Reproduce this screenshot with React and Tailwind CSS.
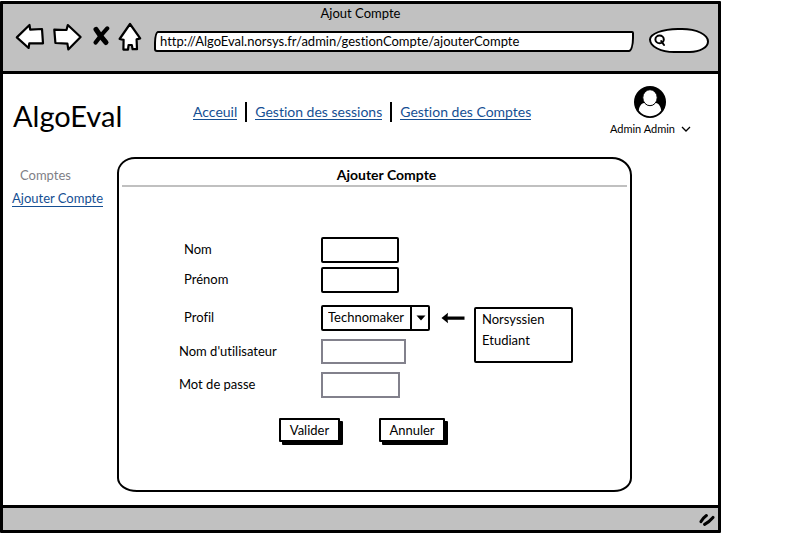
import React from "react";

const Stroke = ({ children, className, viewBox }) => (
  <svg
    viewBox={viewBox}
    className={className}
    fill="white"
    stroke="black"
    strokeWidth="2.2"
    strokeLinejoin="round"
    strokeLinecap="round"
    aria-hidden="true"
  >
    {children}
  </svg>
);

function BrowserBar() {
  return (
    <header className="border-b-[3px] border-black bg-[#c1c1c1] pb-[18px]">
      <h1 className="pt-px text-center text-[13px] leading-4">Ajout Compte</h1>
      <div className="flex items-start pr-[9px] pl-3">
        <button type="button" aria-label="Précédent" className="mt-px">
          <Stroke viewBox="0 0 30 30" className="h-[30px] w-[30px]">
            <path d="M1.8 15.4 L14.5 3 L15.2 7.6 L27 7 L28 21.4 L14.3 21.4 L13.6 26 Z" />
          </Stroke>
        </button>
        <button type="button" aria-label="Suivant" className="mt-px ml-2">
          <Stroke viewBox="0 0 30 30" className="h-[30px] w-[30px]">
            <path d="M1.3 7.6 L13.5 8 L14.8 3 L27.6 15 L15.3 27.4 L14.4 21.6 L2.4 21 Z" />
          </Stroke>
        </button>
        <button type="button" aria-label="Arrêter" className="mt-px ml-[9px]">
          <svg viewBox="0 0 18 30" className="h-[30px] w-[18px]" fill="none" stroke="black" strokeLinecap="round" aria-hidden="true">
            <path d="M4 7.4 Q8 14 14 20.5" strokeWidth="5" />
            <path d="M15.2 6.4 Q9 13 3.6 20.5" strokeWidth="4.2" />
          </svg>
        </button>
        <button type="button" aria-label="Accueil" className="mt-px ml-2">
          <Stroke viewBox="0 0 24 30" className="h-[30px] w-6">
            <path d="M12 2 L22.2 16.4 L18.6 17.4 L19 27.2 L14.6 27.2 L13.8 23 L10.6 23 L10 27.6 L5.4 27.6 L5.6 17.8 L1.6 17 Z" />
          </Stroke>
        </button>
        <input
          type="text"
          aria-label="Adresse"
          defaultValue="http://AlgoEval.norsys.fr/admin/gestionCompte/ajouterCompte"
          className="mt-[10px] ml-3 h-[21px] min-w-0 flex-1 rounded-[4px_2px_5px_3px/12px_2px_14px_3px] border-2 border-black bg-white px-1 pb-[2px] text-[13px] outline-none"
        />
        <label className="mt-[7px] ml-[15px] flex h-[25px] w-[60px] items-center rounded-[30px_28px_20px_26px/12px_14px_12px_14px] border-2 border-black bg-white pl-[3px]">
          <svg viewBox="0 0 12 13" className="h-[13px] w-3 shrink-0" fill="none" stroke="black" strokeWidth="2" strokeLinecap="round" aria-hidden="true">
            <ellipse cx="5.6" cy="5.4" rx="4.2" ry="3.8" />
            <path d="M7.2 7 L10 11" />
          </svg>
          <input type="search" aria-label="Rechercher" className="w-full min-w-0 bg-transparent px-1 text-[11px] outline-none" />
        </label>
      </div>
    </header>
  );
}

const link = "border-b border-[#154f93] text-[#154f93]";

function SiteHeader() {
  return (
    <div className="flex h-[83px] items-start pr-[27px] pl-[10px]">
      <div className="w-[180px] pt-[25px] text-[29px] leading-[34px]">AlgoEval</div>
      <nav className="flex items-center gap-2 pt-[28px] text-[14px] leading-[15px] whitespace-nowrap">
        <a href="#accueil" className={link}>Acceuil</a>
        <span className="h-5 w-[2px] bg-black" />
        <a href="#sessions" className={link}>Gestion des sessions</a>
        <span className="h-5 w-[2px] bg-black" />
        <a href="#comptes" className={link}>Gestion des Comptes</a>
      </nav>
      <button type="button" className="ml-auto flex flex-col items-center pt-[12px]">
        <svg viewBox="0 0 32 32" className="h-8 w-8" aria-hidden="true">
          <circle cx="16" cy="16" r="16" />
          <path d="M4.8 24.5 C5.4 19 8.5 17 11 16.8 C13.8 20.8 18.2 20.8 21 16.8 C23.5 17 26.6 19 27.2 24.5 C22 32 10 32 4.8 24.5 Z" fill="white" />
          <ellipse cx="16" cy="11.7" rx="7.2" ry="8" fill="white" stroke="black" strokeWidth="1" />
        </svg>
        <span className="mt-[3px] flex items-center gap-[6px] text-[11px] leading-4">
          Admin Admin
          <svg viewBox="0 0 10 6" className="h-[6px] w-[10px]" fill="none" stroke="black" strokeWidth="1.3" aria-hidden="true">
            <path d="M1 1 L5 5 L9 1" />
          </svg>
        </span>
      </button>
    </div>
  );
}

const field = "h-[26px] w-[78px] border-2 border-black bg-white px-1 text-[13px] rounded-[2px] outline-none";
const action = "h-6 border-2 border-black bg-white text-[13px] rounded-[1px] shadow-[3px_3px_0_black]";

function AccountForm() {
  return (
    <form className="flex flex-col" onSubmit={(e) => e.preventDefault()}>
      <div className="mt-[50px] ml-[60px] grid grid-cols-[142px_auto_1fr] items-center justify-items-start">
        <label htmlFor="nom" className="pb-[2px] pl-[5px]">Nom</label>
        <input id="nom" type="text" className={field} />
        <span />

        <label htmlFor="prenom" className="mt-1 pb-[2px] pl-[5px]">Prénom</label>
        <input id="prenom" type="text" className={field + " mt-1"} />
        <span />

        <label htmlFor="profil" className="mt-3 pb-[2px] pl-[5px]">Profil</label>
        <div className="relative mt-3">
          <select id="profil" className="h-[26px] w-[109px] appearance-none rounded-[2px] border-2 border-black bg-white pr-5 pb-[2px] pl-[5px] text-[13px] outline-none">
            <option>Technomaker</option>
            <option>Norsyssien</option>
            <option>Etudiant</option>
          </select>
          <span className="pointer-events-none absolute inset-y-0 right-0 flex w-5 items-center justify-center border-l-2 border-black">
            <svg viewBox="0 0 10 6" className="h-[6px] w-[10px]" aria-hidden="true">
              <path d="M0.5 0.5 H9.5 L5 5.5 Z" />
            </svg>
          </span>
        </div>
        <div className="row-span-2 flex items-start self-start pt-[14px] pl-[11px]">
          <svg viewBox="0 0 24 12" className="mt-[5px] h-3 w-6 shrink-0" aria-hidden="true">
            <path d="M0.5 6 L7 0.8 L6.6 4.4 H23.5 V7.8 H6.6 L7 11.2 Z" />
          </svg>
          <ul className="ml-[9px] h-14 w-[99px] rounded-[2px] border-2 border-black bg-white pl-[6px] leading-[21px]">
            <li>Norsyssien</li>
            <li>Etudiant</li>
          </ul>
        </div>

        <label htmlFor="login" className="mt-2 pb-[2px]">Nom d'utilisateur</label>
        <input id="login" type="text" disabled className="mt-2 h-[25px] w-[85px] border-2 border-[#82818c] bg-white" />

        <label htmlFor="motdepasse" className="mt-2 pb-[2px]">Mot de passe</label>
        <input id="motdepasse" type="password" disabled className="mt-2 h-[26px] w-[79px] border-2 border-[#82818c] bg-white" />
      </div>
      <div className="mt-5 ml-[160px] flex gap-[39px]">
        <button type="submit" className={action + " w-[61px]"}>Valider</button>
        <button type="button" className={action + " w-[66px]"}>Annuler</button>
      </div>
    </form>
  );
}

export default function App() {
  return (
    <div className="bg-white pt-px pr-[71px] font-['Lato',sans-serif] text-[13px] leading-4 text-black [font-variant-ligatures:none]">
      <div className="rounded-[1px] border-[3px] border-black">
        <BrowserBar />
        <SiteHeader />
        <div className="flex items-stretch pr-[86px] pb-[13px]">
          <aside className="w-[114px] shrink-0 pt-[10px] pl-[9px]">
            <h2 className="pl-2 text-[#7f7f87]">Comptes</h2>
            <a href="#ajouter" className={link + " mt-[7px] inline-block whitespace-nowrap"}>Ajouter Compte</a>
          </aside>
          <main className="min-h-[335px] min-w-0 flex-1 rounded-[18px_20px_18px_20px/16px_18px_14px_14px] border-2 border-black">
            <h2 className="mx-[3px] border-b-2 border-[#c0c0c0] pt-2 pb-[2px] pl-6 text-center text-[14px] leading-4 font-bold">Ajouter Compte</h2>
            <AccountForm />
          </main>
        </div>
        <footer className="flex h-[25px] items-center justify-end border-t-[3px] border-black bg-[#c1c1c1] pr-[3px]">
          <svg viewBox="0 0 16 14" className="h-[14px] w-4" fill="none" stroke="black" strokeWidth="3" strokeLinecap="round" aria-hidden="true">
            <path d="M2 9.6 Q4 6 7.4 3.6 M5.6 12.4 Q10 10 14 5.4" />
          </svg>
        </footer>
      </div>
    </div>
  );
}
